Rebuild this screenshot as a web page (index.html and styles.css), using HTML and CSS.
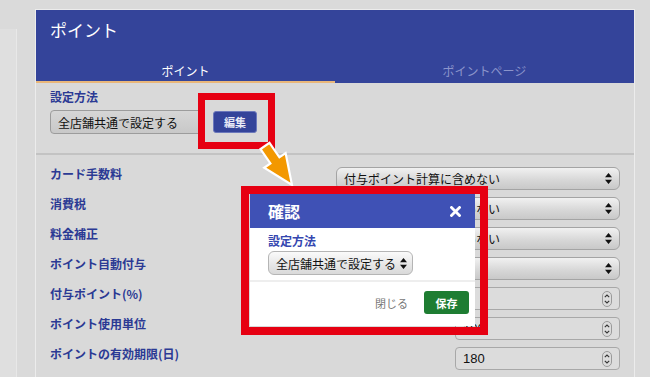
FILE: index.html
```html
<!DOCTYPE html>
<html lang="ja">
<head>
    <meta charset="UTF-8">
    <title>ポイント設定</title>
    <meta name="viewport" content="width=device-width, initial-scale=1">
    <link rel="stylesheet" href="styles.css">
</head>
<body>
<div class="page">
    <div class="side"></div>

    <div class="card">
        <header class="card-head">
            <h1>ポイント</h1>
            <nav class="tabs">
                <span class="tab active">ポイント</span>
                <span class="tab">ポイントページ</span>
            </nav>
        </header>

        <section class="method">
            <div class="label">設定方法</div>
            <div class="method-row">
                <div class="select method-select"><span>全店舗共通で設定する</span></div>
                <button class="btn-edit">編集</button>
            </div>
        </section>

        <section class="settings">
            <div class="row">
                <span class="label">カード手数料</span>
                <div class="select wide"><span>付与ポイント計算に含めない</span>
                    <svg class="updown" width="7" height="11" viewBox="0 0 7 11"><path d="M3.5 0 7 4.2H0z M0 6.8h7L3.5 11z"/></svg>
                </div>
            </div>
            <div class="row">
                <span class="label">消費税</span>
                <div class="select wide"><span>付与ポイント計算に含めない</span>
                    <svg class="updown" width="7" height="11" viewBox="0 0 7 11"><path d="M3.5 0 7 4.2H0z M0 6.8h7L3.5 11z"/></svg>
                </div>
            </div>
            <div class="row">
                <span class="label">料金補正</span>
                <div class="select wide"><span>付与ポイント計算に含めない</span>
                    <svg class="updown" width="7" height="11" viewBox="0 0 7 11"><path d="M3.5 0 7 4.2H0z M0 6.8h7L3.5 11z"/></svg>
                </div>
            </div>
            <div class="row">
                <span class="label">ポイント自動付与</span>
                <div class="select wide"><span>する</span>
                    <svg class="updown" width="7" height="11" viewBox="0 0 7 11"><path d="M3.5 0 7 4.2H0z M0 6.8h7L3.5 11z"/></svg>
                </div>
            </div>
            <div class="row">
                <span class="label">付与ポイント(%)</span>
                <div class="number"><span>1</span>
                    <svg class="spin" width="10" height="16" viewBox="0 0 10 16"><rect x="0.5" y="0.5" width="9" height="15" rx="4.5" fill="none" stroke="#9a9a9a"/><path d="M2.8 6.2 5 4l2.2 2.2M2.8 9.8 5 12l2.2-2.2" fill="none" stroke="#333" stroke-width="1.1"/></svg>
                </div>
            </div>
            <div class="row">
                <span class="label">ポイント使用単位</span>
                <div class="number"><span>100</span>
                    <svg class="spin" width="10" height="16" viewBox="0 0 10 16"><rect x="0.5" y="0.5" width="9" height="15" rx="4.5" fill="none" stroke="#9a9a9a"/><path d="M2.8 6.2 5 4l2.2 2.2M2.8 9.8 5 12l2.2-2.2" fill="none" stroke="#333" stroke-width="1.1"/></svg>
                </div>
            </div>
            <div class="row">
                <span class="label">ポイントの有効期限(日)</span>
                <div class="number"><span>180</span>
                    <svg class="spin" width="10" height="16" viewBox="0 0 10 16"><rect x="0.5" y="0.5" width="9" height="15" rx="4.5" fill="none" stroke="#9a9a9a"/><path d="M2.8 6.2 5 4l2.2 2.2M2.8 9.8 5 12l2.2-2.2" fill="none" stroke="#333" stroke-width="1.1"/></svg>
                </div>
            </div>
            <div class="row">
                <span class="label">ポイント付与対象</span>
            </div>
        </section>
    </div>

    <!-- annotation: arrow + framed dialog -->
    <svg class="arrow" width="50" height="60" viewBox="0 0 50 60">
        <polygon points="19.5,7.9 29.4,22.3 35.6,18 42,50 14.2,32.8 20.4,28.5 10.5,14.1" fill="#f39800" stroke="#fff" stroke-width="2.2" stroke-linejoin="miter"/>
    </svg>

    <div class="callout">
        <div class="modal">
            <div class="modal-head">
                <span>確認</span>
                <svg class="close" width="11" height="11" viewBox="0 0 11 11"><path d="M1.5 1.5l8 8M9.5 1.5l-8 8" stroke="#fff" stroke-width="2.8" stroke-linecap="square"/></svg>
            </div>
            <div class="modal-body">
                <div class="label">設定方法</div>
                <div class="select modal-select"><span>全店舗共通で設定する</span>
                    <svg class="updown" width="7" height="11" viewBox="0 0 7 11"><path d="M3.5 0 7 4.2H0z M0 6.8h7L3.5 11z"/></svg>
                </div>
            </div>
            <div class="modal-foot">
                <span class="btn-close">閉じる</span>
                <button class="btn-save">保存</button>
            </div>
        </div>
    </div>
</div>
</body>
</html>
```

FILE: styles.css
```css
body { margin: 0; background: #dadada; font-family: "Noto Sans CJK JP", "Noto Sans", sans-serif; color: #111; }
.page { position: relative; width: 650px; height: 377px; overflow: hidden; display: flex; align-items: flex-start; }
.side { width: 16px; height: 348px; margin-top: 29px; background: #dfdfdf; border-right: 1px solid #e8e8e8; flex: none; }

.card { width: 600px; margin: 9px 0 0 18px; border: 1px solid #ececec; border-bottom: 0; background: #d9d9d9; flex: none; box-sizing: border-box; }
.card-head { background: #34449a; color: #fff; padding-top: 8px; }
.card-head h1 { margin: 0 0 15px 14px; font-size: 17px; line-height: 24px; font-weight: normal; }
.tabs { display: flex; }
.tab { flex: 1; text-align: center; font-size: 12px; line-height: 20px; padding-top: 4px; color: #8b94cb; border-bottom: 2px solid transparent; }
.tab.active { color: #fff; border-bottom-color: #e9b77a; }

.label { font-size: 12px; font-weight: bold; color: #2b3a94; line-height: 16px; }

.method { padding: 6px 14px 19px; border-bottom: 2px solid #c3c3c3; }
.method-row { display: flex; align-items: center; margin-top: 5px; }
.select { display: flex; align-items: center; justify-content: space-between; box-sizing: border-box; border: 1px solid #a4a4a4; border-radius: 6px; background: linear-gradient(#f1f1f1, #d6d6d6 60%, #c9c9c9); font-size: 12px; padding: 0 7px; }
.method-select { width: 155px; height: 24px; border-radius: 4px; background: linear-gradient(#d6d6d6, #c8c8c8); border-color: #9c9c9c; }
.btn-edit { position: relative; margin-left: 8px; width: 44px; height: 22px; border: 1px solid #6b78bb; border-radius: 3px; background: #34449a; color: #e8eaf6; font-family: inherit; font-size: 11px; font-weight: bold; padding: 0; }
.btn-edit::after { content: ""; position: absolute; left: -16px; top: -19px; right: -19px; bottom: -17px; border: 7px solid #e60012; }

.settings { padding: 12px 14px 0; }
.row { display: flex; justify-content: space-between; align-items: flex-start; height: 30px; }
.row .label { line-height: 14px; }
.select.wide { width: 284px; height: 23px; }
.updown { flex: none; fill: #111; }
.number { display: flex; align-items: center; justify-content: space-between; box-sizing: border-box; width: 165px; height: 23px; border: 1px solid #a8a8a8; border-radius: 4px; background: #dcdcdc; padding: 0 7px; font-size: 13px; font-family: "Liberation Sans", sans-serif; }

.arrow { position: absolute; left: 250px; top: 135px; }
.callout { position: absolute; left: 241px; top: 186px; width: 247px; height: 149px; box-sizing: border-box; border: 8px solid #e60012; padding: 0 5px 0 1px; }
.modal { background: #fff; height: 132px; }
.modal-head { display: flex; justify-content: space-between; align-items: center; height: 34px; padding: 0 14px 0 18px; background: #3f51b5; color: #fff; font-size: 16px; font-weight: bold; }
.modal-body { padding: 5px 0 5px 18px; border-bottom: 2px solid #eeeeee; }
.modal-body .label { color: #3547b0; }
.modal-select { width: 145px; height: 24px; margin-top: 2px; padding: 0 5px 0 7px; border-color: #b5b5b5; background: linear-gradient(#fafafa, #e6e6e6 60%, #d9d9d9); }
.modal-foot { display: flex; justify-content: flex-end; align-items: center; gap: 16px; padding: 9px 6px 0; }
.btn-close { font-size: 11px; color: #777; }
.btn-save { width: 45px; height: 23px; border: 0; border-radius: 3px; background: #1e7d32; color: #fff; font-family: inherit; font-size: 11px; font-weight: bold; padding: 0; }
```
